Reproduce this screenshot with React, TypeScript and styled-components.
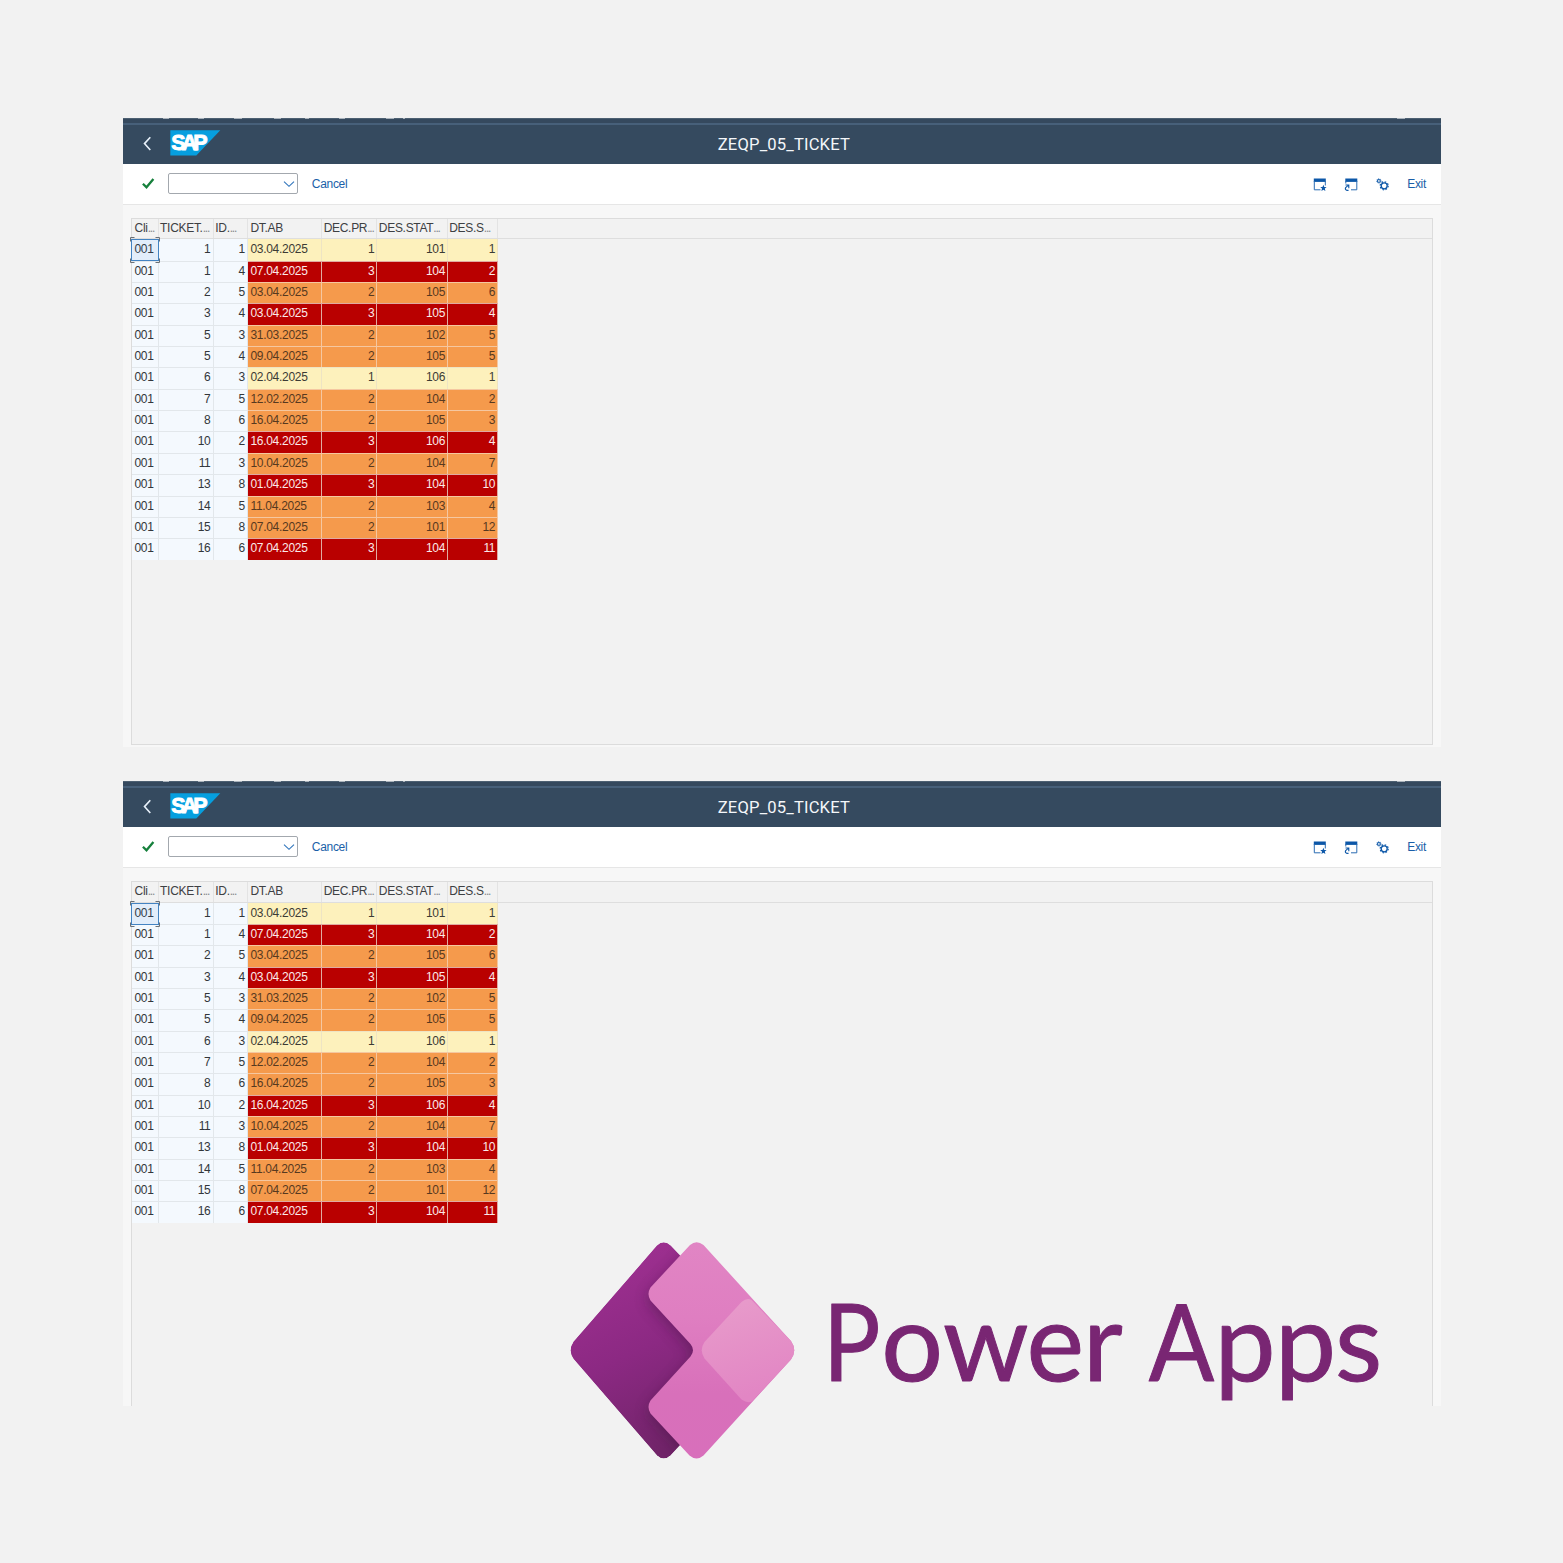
import React from "react";
import styled, { createGlobalStyle } from "styled-components";

const Global = createGlobalStyle`
  html, body { margin: 0; padding: 0; background: #f2f2f2; }
  * { box-sizing: border-box; }
`;

const Page = styled.main`
  position: relative;
  width: 1563px;
  height: 1563px;
  padding: 118px 0 0 122.6px;
  background: #f2f2f2;
  overflow: hidden;
  display: flex;
  flex-direction: column;
  gap: 34.6px;
  font-family: "Liberation Sans", Arial, sans-serif;
`;

const Panel = styled.section<{ $height: number }>`
  width: 1318.6px;
  height: ${(p) => p.$height}px;
  flex: none;
  background: #f7f7f7;
  overflow: hidden;
`;

const TabStrip = styled.div`
  display: flex;
  height: 6.5px;
  background: #35495e;
  border-top: 1px solid #4d6072;
  border-bottom: 2px solid #47607a;
`;

const Shell = styled.header`
  display: grid;
  grid-template-columns: 420px 1fr 420px;
  align-items: center;
  height: 39.5px;
  background: #354a5f;
  color: #f4f7fa;
`;

const ShellStart = styled.div`
  display: flex;
  align-items: center;
  padding: 0 0 2.4px 19.4px;
  gap: 17px;
`;

const Title = styled.h1`
  margin: 0;
  padding: 2px 0 0 4px;
  text-align: center;
  font: 400 16.6px/20px Roboto, "Liberation Sans", sans-serif;
  letter-spacing: 0.16px;
`;

const Toolbar = styled.div`
  display: flex;
  align-items: center;
  justify-content: space-between;
  height: 40.5px;
  padding: 0 15.2px 0 19px;
  background: #fff;
  border-bottom: 1.5px solid #e6e6e6;
`;

const Group = styled.div<{ $gap: number }>`
  display: flex;
  align-items: center;
  gap: ${(p) => p.$gap}px;
`;

const Combo = styled.div`
  display: flex;
  align-items: center;
  justify-content: flex-end;
  width: 130px;
  height: 21px;
  padding-right: 2px;
  border: 1px solid #a3a8ae;
  border-radius: 2px;
  background: #fff;
`;

const Action = styled.button`
  padding: 0;
  border: 0;
  background: none;
  color: #1a5fa8;
  font: 400 12px/14px "Liberation Sans", Arial, sans-serif;
  letter-spacing: -0.3px;
`;

const Grid = styled.div`
  width: 1302px;
  height: 526.7px;
  margin: 13.6px 0 0 8px;
  border: 1px solid #dcdcdc;
  background: #f2f2f2;
`;

const columns = "27.3px 55.2px 34px 74.2px 55.2px 70.6px 50.2px";

const HeadRow = styled.div`
  display: grid;
  grid-template-columns: ${columns};
  height: 20.3px;
  border-bottom: 1px solid #dedede;
`;

const HeadCell = styled.div<{ $inset: number }>`
  padding-left: ${(p) => p.$inset}px;
  border-right: 1px solid #e3e3e3;
  color: #3d4043;
  font-size: 12px;
  letter-spacing: -0.3px;
  line-height: 18.4px;
  white-space: nowrap;
`;

const Dots = styled.span`
  color: #85888c;
  letter-spacing: -1.2px;
`;

type Tone = "low" | "mid" | "high" | "plain";
const fills: Record<Tone, string> = { low: "#fdf1bc", mid: "#f59a4c", high: "#b90000", plain: "#f4f9fe" };
const inks: Record<Tone, string> = { low: "#3c3b35", mid: "#57391f", high: "#fbe9e9", plain: "#32363a" };
const rules: Record<Tone, string> = { low: "#eee4c4", mid: "#f5c7a0", high: "#e0aba2", plain: "#e2e7eb" };

const Row = styled.div`
  display: grid;
  grid-template-columns: ${columns};
  height: 21.35px;
`;

const Cell = styled.div<{ $tone: Tone; $right?: boolean; $pad: number; $first: boolean }>`
  position: relative;
  padding: 0 ${(p) => (p.$right ? p.$pad : 0)}px 0 ${(p) => (p.$right ? 0 : p.$pad)}px;
  text-align: ${(p) => (p.$right ? "right" : "left")};
  background: ${(p) => fills[p.$tone]};
  color: ${(p) => inks[p.$tone]};
  border-right: 1px solid ${(p) => rules[p.$tone]};
  border-top: ${(p) => (p.$first ? "0 solid" : "1px solid")} ${(p) => rules[p.$tone]};
  font-size: 12px;
  letter-spacing: -0.3px;
  line-height: ${(p) => (p.$first ? 21 : 19.6)}px;
  white-space: nowrap;
`;

const Focus = styled.svg`
  position: absolute;
  left: -3px;
  top: -3px;
`;

const FocusCell = styled(Cell)`
  z-index: 1;
`;

const Brand = styled.svg`
  position: absolute;
  left: 560px;
  top: 1230px;
`;

const heads: [string, boolean, number][] = [
  ["Cli", true, 3],
  ["TICKET.", true, 1.2],
  ["ID.", true, 1.2],
  ["DT.AB", false, 2.4],
  ["DEC.PR", true, 1.4],
  ["DES.STAT", true, 1.4],
  ["DES.S", true, 1.2],
];

const tickets: [number, number, string, number, number, number][] = [
  [1, 1, "03.04.2025", 1, 101, 1],
  [1, 4, "07.04.2025", 3, 104, 2],
  [2, 5, "03.04.2025", 2, 105, 6],
  [3, 4, "03.04.2025", 3, 105, 4],
  [5, 3, "31.03.2025", 2, 102, 5],
  [5, 4, "09.04.2025", 2, 105, 5],
  [6, 3, "02.04.2025", 1, 106, 1],
  [7, 5, "12.02.2025", 2, 104, 2],
  [8, 6, "16.04.2025", 2, 105, 3],
  [10, 2, "16.04.2025", 3, 106, 4],
  [11, 3, "10.04.2025", 2, 104, 7],
  [13, 8, "01.04.2025", 3, 104, 10],
  [14, 5, "11.04.2025", 2, 103, 4],
  [15, 8, "07.04.2025", 2, 101, 12],
  [16, 6, "07.04.2025", 3, 104, 11],
];

const toneOf = (priority: number): Tone => (priority === 3 ? "high" : priority === 2 ? "mid" : "low");

const BackIcon = () => (
  <svg width="11" height="16" viewBox="0 0 11 16" fill="none">
    <path d="M8.300 2.200 2.500 8.600l5.800 6.400" stroke="#e8f1fa" strokeWidth="1.600" />
  </svg>
);

const SapLogo = () => (
  <svg width="51" height="26" viewBox="0 0 51 26">
    <path d="M.3.3h50L26.300 25.600H.3z" fill="#069fdf" />
    <text
      x="1.300"
      y="19.900"
      fontFamily="Liberation Sans, Arial, sans-serif"
      fontWeight="700"
      fontSize="21.500"
      fill="#fff"
      stroke="#fff"
      strokeWidth=".9"
      letterSpacing="-3.900"
    >
      SAP
    </text>
  </svg>
);

const CheckIcon = () => (
  <svg width="13" height="11" viewBox="0 0 13 11" fill="none">
    <path d="M.9 5.700 4.500 9.300 11.400 1" stroke="#16803c" strokeWidth="2.300" />
  </svg>
);

const ChevronIcon = () => (
  <svg width="12" height="8" viewBox="0 0 12 8" fill="none">
    <path d="m1 1.600 5 4.700 5-4.700" stroke="#2f74bb" strokeWidth="1.100" />
  </svg>
);

const NewWindowIcon = () => (
  <svg width="14" height="14" viewBox="0 0 14 14">
    <path d="M.8 1.500h12v3.400H.8z" fill="#0c57a8" />
    <path d="M1.300 4v8.800h6.200M12.300 4v4.500" fill="none" stroke="#2a6cb3" />
    <path d="m10.400 7.800.9 2.100 2.300.2-1.800 1.500.6 2.300-2-1.200-2 1.200.6-2.300-1.800-1.500 2.300-.2z" fill="#0c57a8" />
  </svg>
);

const ShortcutIcon = () => (
  <svg width="14" height="14" viewBox="0 0 14 14">
    <path d="M1.300 1.500h12v3.400h-12z" fill="#0c57a8" />
    <path d="M1.800 4v2.500M12.800 4v8.800H7" fill="none" stroke="#2a6cb3" />
    <path d="M4.600 13.200c-2.700.6-4-1.200-2.700-2.900.6-.8 1.400-1.200 2.600-1.500M1.500 8h3.300v3.200" fill="none" stroke="#0c57a8" strokeWidth="1.100" />
  </svg>
);

const GearsIcon = () => (
  <svg width="14" height="14" viewBox="0 0 14 14" fill="none" stroke="#0c57a8">
    <circle cx="2.900" cy="3.900" r="1.400" strokeWidth="1.100" />
    <circle cx="2.900" cy="3.900" r="2.200" strokeWidth=".8" strokeDasharray=".9 .83" />
    <circle cx="8.200" cy="8.800" r="3" strokeWidth="1.300" />
    <circle cx="8.200" cy="8.800" r="4" strokeWidth="1.200" strokeDasharray="1.570 1.570" />
  </svg>
);

const TabTicks = () => (
  <svg width="1318" height="1" viewBox="0 0 1318 1" style={{ marginTop: -1 }}>
    {[[40, 6], [75, 6], [111, 8], [151, 7], [182, 4], [216, 6], [263, 8], [280, 2], [1274, 8]].map(([x, w]) => (
      <rect key={x} x={x} y="0" width={w} height="1" fill="#a9b2bb" />
    ))}
  </svg>
);

const TicketWindow = ({ height }: { height: number }) => (
  <Panel $height={height}>
    <TabStrip>
      <TabTicks />
    </TabStrip>
    <Shell>
      <ShellStart>
        <BackIcon />
        <SapLogo />
      </ShellStart>
      <Title>ZEQP_05_TICKET</Title>
    </Shell>
    <Toolbar>
      <Group $gap={13.6}>
        <CheckIcon />
        <Combo>
          <ChevronIcon />
        </Combo>
        <Action>Cancel</Action>
      </Group>
      <Group $gap={17.4}>
        <NewWindowIcon />
        <ShortcutIcon />
        <GearsIcon />
        <Action>Exit</Action>
      </Group>
    </Toolbar>
    <Grid>
      <HeadRow>
        {heads.map(([label, cut, inset]) => (
          <HeadCell key={label} $inset={inset}>
            {label}
            {cut && <Dots>...</Dots>}
          </HeadCell>
        ))}
      </HeadRow>
      {tickets.map(([ticket, id, date, priority, status, service], i) => {
        const tone = toneOf(priority);
        const first = i === 0;
        return (
          <Row key={i}>
            {first ? (
              <FocusCell $tone="plain" $pad={2.8} $first>
                001
                <Focus width="33" height="28" viewBox="0 0 33 28" fill="none">
                  <rect x="2.500" y="3.500" width="27" height="21" fill="#2f7fd0" fillOpacity=".09" stroke="#4383c2" />
                  <path d="M1.500 5.500v-4h4M26.500 1.500h4v4M1.500 22.500v4h4M30.500 22.500v4h-4" stroke="#6a7077" />
                </Focus>
              </FocusCell>
            ) : (
              <Cell $tone="plain" $pad={2.8} $first={false}>001</Cell>
            )}
            <Cell $tone="plain" $right $pad={2.6} $first={first}>{ticket}</Cell>
            <Cell $tone="plain" $right $pad={2.1} $first={first}>{id}</Cell>
            <Cell $tone={tone} $pad={2.4} $first={first}>{date}</Cell>
            <Cell $tone={tone} $right $pad={2} $first={first}>{priority}</Cell>
            <Cell $tone={tone} $right $pad={2} $first={first}>{status}</Cell>
            <Cell $tone={tone} $right $pad={2} $first={first}>{service}</Cell>
          </Row>
        );
      })}
    </Grid>
  </Panel>
);

const PowerApps = () => (
  <Brand width="840" height="240" viewBox="560 1230 840 240">
    <defs>
      <linearGradient id="dark" x1="0" y1="0" x2=".4" y2="1">
        <stop offset="0" stopColor="#a33294" />
        <stop offset=".55" stopColor="#8c2983" />
        <stop offset="1" stopColor="#712469" />
      </linearGradient>
      <linearGradient id="pink" x1="0" y1="0" x2="0" y2="1">
        <stop offset="0" stopColor="#e185c4" />
        <stop offset=".35" stopColor="#df7ec1" />
        <stop offset=".7" stopColor="#d870ba" />
        <stop offset="1" stopColor="#d86fbb" />
      </linearGradient>
      <linearGradient id="light" x1="0" y1="0" x2=".3" y2="1">
        <stop offset="0" stopColor="#e89dcb" />
        <stop offset="1" stopColor="#e286c4" />
      </linearGradient>
      <clipPath id="leaf">
        <path d="M656.800 1245.600Q663.600 1239 670.800 1245.600L682 1257L700 1350L682 1443L670.800 1455.200Q663.600 1462 656.800 1455.200L573.500 1359Q567.500 1350.300 573.500 1341.500Z" />
      </clipPath>
      <filter id="soft" x="-20%" y="-20%" width="140%" height="140%">
        <feGaussianBlur stdDeviation="7" />
      </filter>
      <path id="front" d="M690 1245Q696.500 1239.500 703.500 1245L791 1341Q797.500 1350.300 791 1359.500L703.500 1455.500Q696.500 1461.500 689.500 1455.500L650.500 1413.500Q646.500 1407 650.500 1400.500L690.500 1356.500Q695.500 1350.300 690.500 1344L650.500 1300.500Q646.500 1294 650.500 1287.500Z" />
    </defs>
    <g clipPath="url(#leaf)">
      <path d="M656.800 1245.600Q663.600 1239 670.800 1245.600L760 1341.500Q765 1350 760 1359L670.800 1455.200Q663.600 1462 656.800 1455.200L573.500 1359Q567.500 1350.300 573.500 1341.500Z" fill="url(#dark)" />
      <use href="#front" transform="translate(-1 5)" fill="#3f123e" opacity=".4" filter="url(#soft)" />
    </g>
    <use href="#front" fill="url(#pink)" />
    <path d="M751.500 1300 791 1341Q797.500 1350.300 791 1359.500L752 1401.500Q747.500 1403.500 741.500 1399.500L704.500 1358.500Q699 1350.300 704.500 1342L741.500 1302Q747 1297.500 751.500 1300Z" fill="url(#light)" />
    <text
      y="1381"
      fontFamily="Lato, Open Sans, sans-serif"
      fontSize="109"
      fill="#792673"
      stroke="#792673"
      strokeWidth="1"
      strokeLinejoin="round"
    >
      <tspan x="823" fontSize="106.500" textLength="57.500" lengthAdjust="spacingAndGlyphs">P</tspan>
      <tspan x="881.200 943 1026.500 1083">ower</tspan>
      <tspan x="1148.800" fontSize="106.500" textLength="65.500" lengthAdjust="spacingAndGlyphs">A</tspan>
      <tspan x="1214.500 1275 1335">pps</tspan>
    </text>
  </Brand>
);

export default function App() {
  return (
    <>
      <Global />
      <Page>
        <TicketWindow height={628.6} />
        <TicketWindow height={625} />
        <PowerApps />
      </Page>
    </>
  );
}
